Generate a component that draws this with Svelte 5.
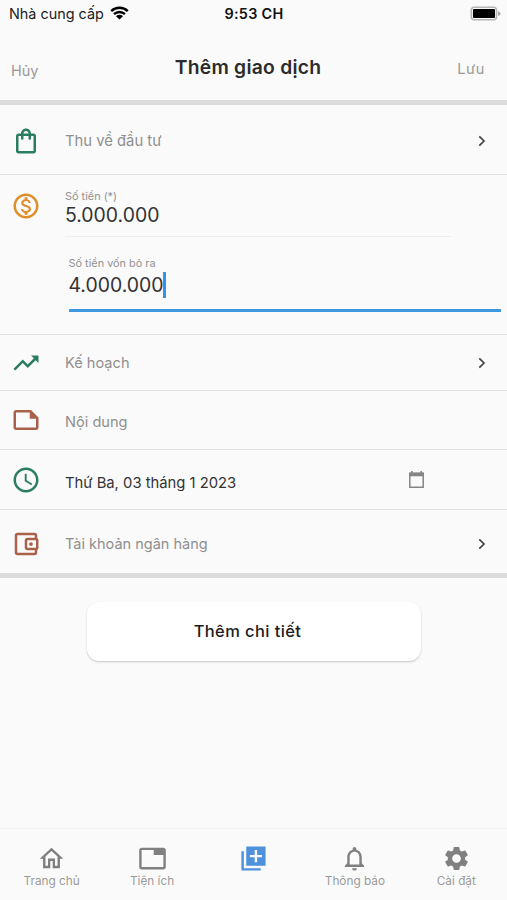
<script lang="ts">
	const icons = {
		bag: 'M18 6h-2c0-2.21-1.79-4-4-4S8 3.79 8 6H6c-1.1 0-2 .9-2 2v12c0 1.1.9 2 2 2h12c1.1 0 2-.9 2-2V8c0-1.1-.9-2-2-2zm-6-2c1.1 0 2 .9 2 2h-4c0-1.1.9-2 2-2zm6 16H6V8h2v2c0 .55.45 1 1 1s1-.45 1-1V8h4v2c0 .55.45 1 1 1s1-.45 1-1V8h2v12z',
		money:
			'M12 2C6.48 2 2 6.48 2 12s4.48 10 10 10 10-4.48 10-10S17.52 2 12 2zm0 18c-4.41 0-8-3.59-8-8s3.59-8 8-8 8 3.59 8 8-3.59 8-8 8zm.31-8.86c-1.77-.45-2.34-.94-2.34-1.67 0-.84.79-1.43 2.1-1.43 1.38 0 1.9.66 1.94 1.64h1.71c-.05-1.34-.87-2.57-2.49-2.97V5H10.9v1.69c-1.51.32-2.72 1.3-2.72 2.81 0 1.79 1.49 2.69 3.66 3.21 1.95.46 2.34 1.15 2.34 1.87 0 .53-.39 1.39-2.1 1.39-1.6 0-2.23-.72-2.32-1.64H8.04c.1 1.7 1.36 2.66 2.86 2.97V19h2.34v-1.67c1.52-.29 2.72-1.16 2.73-2.77-.01-2.2-1.9-2.96-3.66-3.42z',
		trend: 'M16 6l2.29 2.29-4.88 4.88-4-4L2 16.59 3.41 18l6-6 4 4 6.3-6.29L22 12V6z',
		note: 'M16 4H4c-1.1 0-2 .9-2 2v12.01c0 1.1.9 1.99 2 1.99h16c1.1 0 2-.9 2-2v-8l-6-6zM4 18.01V6h11v5h5v7.01H4z',
		clock:
			'M11.99 2C6.47 2 2 6.48 2 12s4.47 10 9.99 10C17.52 22 22 17.52 22 12S17.52 2 11.99 2zM12 20c-4.42 0-8-3.58-8-8s3.58-8 8-8 8 3.58 8 8-3.58 8-8 8zm.5-13H11v6l5.25 3.15.75-1.23-4.5-2.67z',
		wallet:
			'M21 7.28V5c0-1.1-.9-2-2-2H5c-1.11 0-2 .9-2 2v14c0 1.1.89 2 2 2h14c1.1 0 2-.9 2-2v-2.28c.59-.35 1-.98 1-1.72V9c0-.74-.41-1.37-1-1.72zM20 9v6h-7V9h7zM5 19V5h14v2h-6c-1.1 0-2 .9-2 2v6c0 1.1.9 2 2 2h6v2H5zM16 10.5a1.5 1.5 0 1 0 0 3 1.5 1.5 0 0 0 0-3z'
	};

	const tabs = [
		{
			label: 'Trang chủ',
			path: 'M12 3 2.2 12.2H5V20h6v-6h2v6h6v-7.800h2.800L12 3zm0 2.700 5 4.600V18.100h-2.100V12H9.100v6.100H7V10.300l5-4.600z'
		},
		{
			label: 'Tiện ích',
			path: 'M21 3H3c-1.1 0-2 .9-2 2v14c0 1.1.9 2 2 2h18c1.1 0 2-.9 2-2V5c0-1.1-.9-2-2-2zm0 16H3V5h10v4h8v10z'
		},
		{
			label: '',
			path: 'M4 6H2v16h16v-2H4V6zM6 2v16h16V2H6zm13 9h-4v4h-2v-4H9V9h4V5h2v4h4v2z'
		},
		{
			label: 'Thông báo',
			path: 'M12 22c1.1 0 2-.9 2-2h-4c0 1.1.9 2 2 2zm6-6v-5c0-3.07-1.63-5.64-4.5-6.32V4c0-.83-.67-1.5-1.5-1.5s-1.5.67-1.5 1.5v.68C7.64 5.36 6 7.92 6 11v5l-2 2v1h16v-1l-2-2zm-2 1H8v-6c0-2.48 1.51-4.5 4-4.5s4 2.02 4 4.5v6z'
		},
		{
			label: 'Cài đặt',
			path: 'M19.14 12.94c.04-.3.06-.61.06-.94 0-.32-.02-.64-.07-.94l2.03-1.58c.18-.14.23-.41.12-.61l-1.92-3.32c-.12-.22-.37-.29-.59-.22l-2.39.96c-.5-.38-1.03-.7-1.62-.94l-.36-2.54c-.04-.24-.24-.41-.48-.41h-3.84c-.24 0-.43.17-.47.41l-.36 2.54c-.59.24-1.13.57-1.62.94l-2.39-.96c-.22-.08-.47 0-.59.22L2.74 8.87c-.12.21-.08.47.12.61l2.03 1.58c-.05.3-.09.63-.09.94s.02.64.07.94l-2.03 1.58c-.18.14-.23.41-.12.61l1.92 3.32c.12.22.37.29.59.22l2.39-.96c.5.38 1.03.7 1.62.94l.36 2.54c.05.24.24.41.48.41h3.84c.24 0 .44-.17.47-.41l.36-2.54c.59-.24 1.13-.56 1.62-.94l2.39.96c.22.08.47 0 .59-.22l1.92-3.32c.12-.22.07-.47-.12-.61l-2.01-1.58zM12 15.6c-1.98 0-3.6-1.62-3.6-3.6s1.62-3.6 3.6-3.6 3.6 1.62 3.6 3.6-1.62 3.6-3.6 3.6z'
		}
	];

	let amount = $state('5.000.000');
	let capital = $state('4.000.000');
</script>

{#snippet icon(name, color)}
	<svg class="icon {color}" viewBox="0 0 24 24"><path d={icons[name]} /></svg>
{/snippet}

{#snippet chevron()}
	<svg class="chevron" viewBox="0 0 8 12"><path d="M1.3 1.4 6 6 1.3 10.6" /></svg>
{/snippet}

<div class="screen">
	<div class="status">
		<div class="carrier">
			<span>Nhà cung cấp</span>
			<svg class="wifi" viewBox="0 0 19 14">
				<path d="M1.2 5.1a12 12 0 0 1 16.6 0M4 8.2a8 8 0 0 1 11 0" />
				<path class="dot" d="M9.5 13.6 6 10.3a5 5 0 0 1 7 0z" />
			</svg>
		</div>
		<div class="time">9:53 CH</div>
		<svg class="battery" viewBox="0 0 31 15">
			<rect class="shell" x="1.3" y="1.2" width="25.2" height="12.6" rx="3" />
			<rect x="3" y="3" width="22" height="9" rx="1" />
			<path class="nub" d="M28 5v5q2.6-1 2.6-2.5T28 5z" />
		</svg>
	</div>

	<header>
		<button class="action">Hủy</button>
		<h1>Thêm giao dịch</h1>
		<button class="action save">Lưu</button>
	</header>

	<main>
		<div class="row category">
			{@render icon('bag', 'green')}
			<span class="text">Thu về đầu tư</span>
			{@render chevron()}
		</div>
		<div class="row amounts">
			{@render icon('money', 'orange')}
			<div class="fields">
				<div class="field">
					<div class="label">Số tiền (*)</div>
					<div class="value">{amount}</div>
				</div>
				<div class="field focused">
					<div class="label">Số tiền vốn bỏ ra</div>
					<div class="value">{capital}<i class="caret"></i></div>
				</div>
			</div>
		</div>
		<div class="row plan">
			{@render icon('trend', 'green')}
			<span class="text">Kế hoạch</span>
			{@render chevron()}
		</div>
		<div class="row content">
			{@render icon('note', 'brown')}
			<span class="text">Nội dung</span>
		</div>
		<div class="row date">
			{@render icon('clock', 'green')}
			<span class="text">Thứ Ba, 03 tháng 1 2023</span>
			<svg class="calendar" viewBox="0 0 17 18">
				<path class="frame" d="M1.8 2.3h13.4v13.9H1.8z" />
				<path d="M1 1.8h15v3.4H1zM3 0h1.6v2H3zM12.4 0H14v2h-1.6z" />
			</svg>
		</div>
		<div class="row bank">
			{@render icon('wallet', 'brown')}
			<span class="text">Tài khoản ngân hàng</span>
			{@render chevron()}
		</div>
	</main>

	<button class="details">Thêm chi tiết</button>

	<nav>
		{#each tabs as tab}
			<div class="tab" class:active={!tab.label}>
				<svg viewBox="0 0 24 24"><path d={tab.path} /></svg>
				{#if tab.label}<span>{tab.label}</span>{/if}
			</div>
		{/each}
	</nav>
</div>

<style>
	:global(body) {
		margin: 0;
		background: #fafafa;
	}

	.screen {
		display: flex;
		flex-direction: column;
		width: 507px;
		height: 900px;
		overflow: hidden;
		background: #fafafa;
		color: #2b2b2b;
		font-family: Inter, 'Noto Sans', sans-serif;
	}

	button {
		border: 0;
		padding: 0;
		background: none;
		font-family: inherit;
	}

	.status {
		display: grid;
		grid-template-columns: 1fr auto 1fr;
		align-items: center;
		height: 28px;
		padding: 0 6px 0 9px;
		box-sizing: border-box;
		font-size: 14.4px;
		color: #222;
	}
	.carrier,
	.time {
		margin-top: -2px;
	}
	.carrier {
		display: flex;
		align-items: center;
		gap: 6px;
	}
	.time {
		margin-left: -2px;
		font-weight: 600;
		letter-spacing: 0.3px;
		color: #111;
	}
	.wifi {
		width: 19px;
		height: 14px;
		margin-top: -1px;
		fill: none;
		stroke: #000;
		stroke-width: 2.4;
	}
	.wifi .dot {
		fill: #000;
		stroke: none;
	}
	.battery {
		width: 31px;
		height: 15px;
		margin-top: -2px;
		justify-self: end;
	}
	.battery .shell {
		fill: none;
		stroke: #b5b5b5;
		stroke-width: 1.6;
	}
	.battery .nub {
		fill: #aaa;
	}

	header {
		display: grid;
		grid-template-columns: 1fr auto 1fr;
		align-items: center;
		height: 72px;
		padding: 0 22px 0 11px;
		border-bottom: 5px solid #dcdcdc;
	}
	h1 {
		margin: 6px 0 0;
		font-size: 19.3px;
		line-height: 24px;
		font-weight: 600;
		letter-spacing: 0.25px;
	}
	.action {
		justify-self: start;
		padding-top: 13px;
		font-size: 14.5px;
		line-height: 18px;
		color: #999;
	}
	.save {
		justify-self: end;
		padding-top: 10px;
		letter-spacing: 0.7px;
	}

	.row {
		display: flex;
		align-items: center;
		box-sizing: border-box;
		padding: 0 21px 0 11px;
		border-bottom: 1px solid #e0e0e0;
	}
	.icon {
		width: 30px;
		height: 30px;
		margin-right: 24px;
		flex: none;
	}
	.green {
		fill: #2a7d60;
	}
	.orange {
		fill: #e08e2b;
	}
	.brown {
		fill: #a9614b;
	}
	.text {
		flex: 1;
		padding-top: 2px;
		font-size: 14.6px;
		line-height: 20px;
		color: #8f8f8f;
	}
	.chevron {
		width: 8px;
		height: 12px;
		fill: none;
		stroke: #444;
		stroke-width: 1.7;
	}
	.category {
		height: 70px;
		padding-top: 3px;
	}
	.category .text {
		padding-top: 0;
		font-size: 14.8px;
	}
	.amounts {
		height: 160px;
		align-items: flex-start;
		padding: 16px 6px 0 11px;
	}
	.plan {
		height: 56px;
	}
	.plan .text {
		padding-top: 0;
	}
	.content {
		height: 59px;
	}
	.content .text {
		padding-top: 3px;
	}
	.date {
		height: 60px;
		padding-right: 82px;
	}
	.date .text {
		padding-top: 7px;
		font-size: 14.8px;
		color: #333;
	}
	.bank {
		height: 68px;
		padding-top: 4px;
		border-bottom: 5px solid #dcdcdc;
	}
	.bank .text {
		padding-top: 0;
		font-size: 14.5px;
	}
	.calendar {
		width: 17px;
		height: 18px;
		fill: #858585;
	}
	.calendar .frame {
		fill: none;
		stroke: #858585;
		stroke-width: 1.5;
	}

	.fields {
		flex: 1;
	}
	.field {
		width: 386px;
		height: 45px;
		border-bottom: 1px solid #eee;
	}
	.label {
		font-size: 10.9px;
		line-height: 13px;
		color: #929292;
	}
	.field:first-child {
		margin-top: -1px;
		height: 46px;
	}
	.value {
		display: flex;
		align-items: center;
		height: 24px;
		font-size: 19.4px;
		color: #333;
	}
	.focused {
		width: auto;
		height: 52px;
		margin: 20px 0 0 3.5px;
		border-bottom: 3px solid #3d98e0;
	}
	.focused .value {
		height: 30px;
	}
	.caret {
		width: 2.5px;
		height: 26px;
		background: #2f94ea;
	}

	.details {
		align-self: center;
		width: 334px;
		height: 59px;
		margin-top: 24px;
		border-radius: 12px;
		background: #fff;
		box-shadow: 0 1px 2px rgba(0, 0, 0, 0.22);
		font-size: 16.5px;
		font-weight: 500;
		letter-spacing: 0.4px;
		padding: 0 12px 2px 0;
		color: #1c1c1c;
	}

	nav {
		display: grid;
		grid-template-columns: repeat(5, 1fr);
		height: 71px;
		margin-top: auto;
		border-top: 1px solid #f3f3f3;
	}
	.tab {
		display: flex;
		flex-direction: column;
		align-items: center;
		padding-top: 15px;
		font-size: 11.8px;
		line-height: 16px;
		color: #9a9a9a;
	}
	.tab:first-child {
		padding-left: 2px;
	}
	.tab svg {
		width: 29px;
		height: 29px;
		fill: #808080;
	}
	.active svg {
		fill: #4f92dc;
	}
</style>
